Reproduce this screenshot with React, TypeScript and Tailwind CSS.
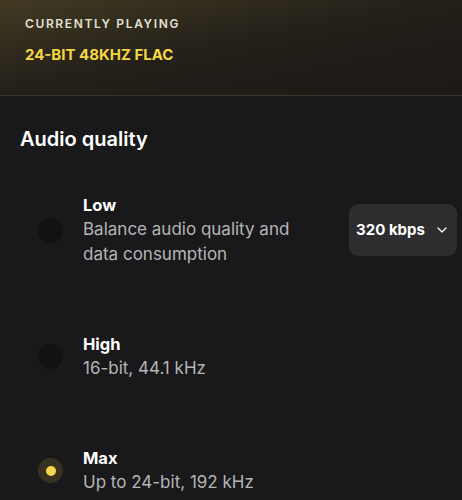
import { ChevronDown } from 'lucide-react';

const font = { fontFamily: 'Inter, "Noto Sans", sans-serif' };

function Radio({ on }: { on?: boolean }) {
  if (on) {
    return (
      <div className="w-[25px] h-[25px] rounded-full bg-[#37321f] flex items-center justify-center shrink-0">
        <div className="w-[10px] h-[10px] rounded-full bg-[#f6d54a]" />
      </div>
    );
  }
  return <div className="w-[25px] h-[25px] rounded-full bg-[#121214] shrink-0" />;
}

function Option({ title, lines, on, right }: { title: string; lines: string[]; on?: boolean; right?: React.ReactNode }) {
  return (
    <div className="flex items-center pl-[38px] pr-[5px]">
      <Radio on={on} />
      <div className="ml-[20px] flex flex-col">
        <div className="text-[16.5px] leading-[24px] font-bold text-white">{title}</div>
        {lines.map((l) => (
          <div key={l} className="text-[17px] leading-[25px] text-[#b5b5b5]">{l}</div>
        ))}
      </div>
      {right && <div className="ml-auto">{right}</div>}
    </div>
  );
}

export default function App() {
  return (
    <div className="w-[462px] h-[500px] overflow-hidden bg-[#19191b]" style={font}>
      <div className="h-[96px] border-b border-[#3a3628] bg-gradient-to-br from-[#423a22] via-[#231f19] to-[#1c1a17] pl-[25px] pt-[16px]">
        <div className="text-[12px] leading-[16px] tracking-[0.135em] text-[#e4e0d4] font-semibold">CURRENTLY PLAYING</div>
        <div className="mt-[14px] text-[15px] leading-[18px] font-bold text-[#f5d742]">24-BIT 48KHZ FLAC</div>
      </div>

      <div className="pl-[20px] pt-[31px] text-[20px] leading-[24px] font-semibold text-white">Audio quality</div>

      <div className="mt-[42px] flex flex-col gap-[65px]">
        <Option
          title="Low"
          lines={['Balance audio quality and', 'data consumption']}
          right={
            <button className="w-[108px] h-[52px] rounded-[9px] bg-[#2d2d2f] flex items-center justify-center gap-[9px] text-white text-[15px] font-bold">
              320 kbps
              <ChevronDown size={16} strokeWidth={1.8} />
            </button>
          }
        />
        <Option title="High" lines={['16-bit, 44.1 kHz']} />
        <Option title="Max" lines={['Up to 24-bit, 192 kHz']} on />
      </div>
    </div>
  );
}
